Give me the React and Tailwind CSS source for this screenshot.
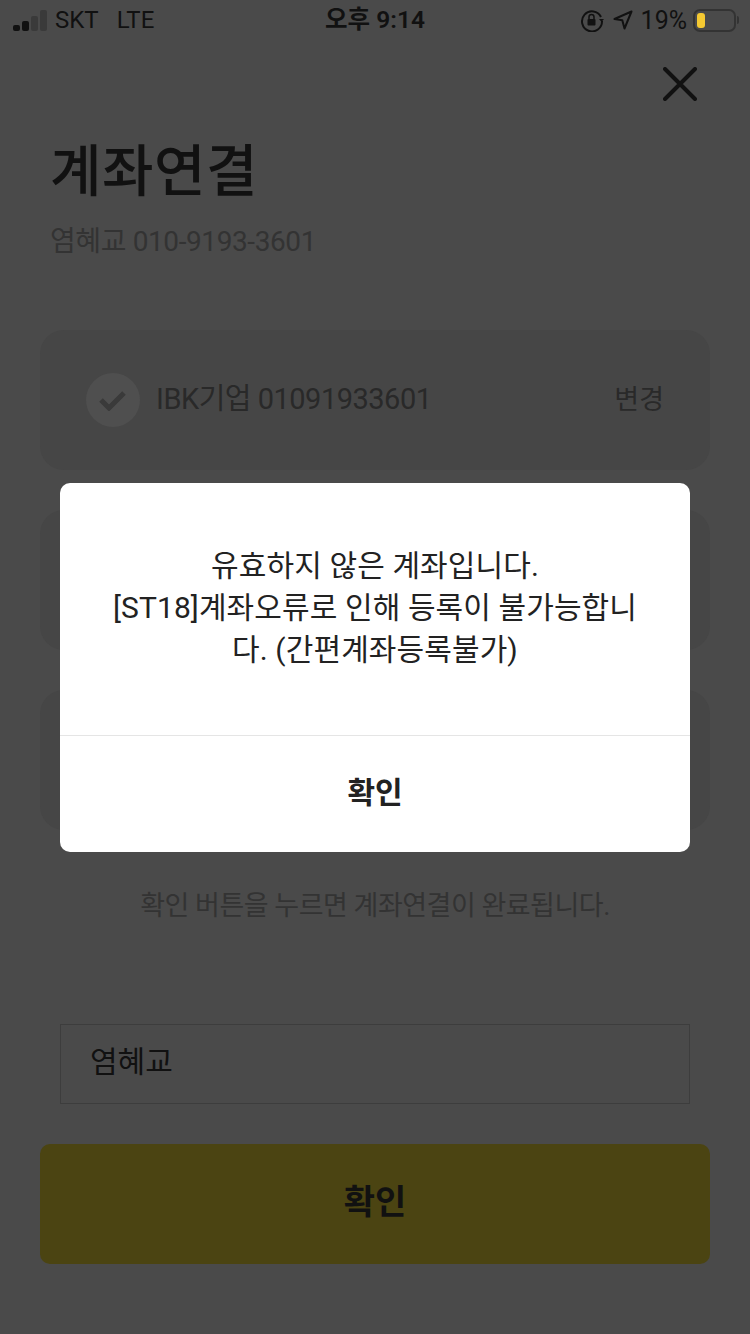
import React from 'react';

const FONT = "font-['Roboto','Noto_Sans_CJK_KR',sans-serif]";

function StatusBar() {
  return (
    <div className="flex h-10 items-center justify-between pl-[13px] pr-[11px] text-[#111]">
      <div className="flex w-[240px] items-center">
        <div className="flex items-end gap-[2px]">
          <span className="h-[6px] w-[7px] rounded-[2px] bg-[#111]" />
          <span className="h-[10px] w-[7px] rounded-[2px] bg-[#111]" />
          <span className="h-[15px] w-[7px] rounded-[2px] bg-[#3a3a3a]" />
          <span className="h-[21px] w-[7px] rounded-[2px] bg-[#3a3a3a]" />
        </div>
        <span className="ml-[8px] text-[24px] leading-none">SKT</span>
        <span className="ml-[18px] text-[24px] leading-none">LTE</span>
      </div>
      <div className="pr-[2px] text-[24.5px] font-semibold leading-none">오후 9:14</div>
      <div className="flex w-[240px] items-center justify-end">
        <svg width="24" height="24" viewBox="0 0 24 24" fill="none" stroke="#111" strokeWidth="2">
          <path d="M21 9A10 10 0 1 0 22 13" />
          <path d="M19 11h5l-2.5 3z" fill="#111" stroke="none" />
          <rect x="7.5" y="11" width="8" height="6.5" rx="1" fill="#111" stroke="none" />
          <path d="M9 11V9a2.500 2.500 0 0 1 5 0v2" strokeWidth="1.500" />
        </svg>
        <svg className="ml-[9px]" width="20" height="20" viewBox="0 0 20 20" fill="none" stroke="#111" strokeWidth="2" strokeLinejoin="round">
          <path d="M18.500 1.500 1.500 9l7.800 1.200L11.500 18.500z" />
        </svg>
        <span className="ml-[8px] text-[25px] leading-none">19%</span>
        <div className="ml-[6px] flex h-[23px] w-[43px] items-center rounded-[7px] border-2 border-[#333] pl-[2px]">
          <span className="h-[15px] w-[8px] rounded-[3px] bg-[#f5c932]" />
        </div>
        <span className="ml-[1px] h-[8px] w-[2px] rounded-r bg-[#333]" />
      </div>
    </div>
  );
}

function AccountCard({ children }) {
  return <div className="flex h-[140px] items-center rounded-[24px] bg-[#464646] pl-[46px] pr-[46px]">{children}</div>;
}

function Modal() {
  return (
    <div className="absolute inset-0 flex items-start justify-center pt-[483px]">
      <div className="w-[630px] overflow-hidden rounded-[10px] bg-white">
        <div className="flex h-[252px] items-center justify-center px-[50px] pb-[2px] text-center text-[30px] leading-[42px] tracking-[0.1px] text-[#222]">
          <p>
            유효하지 않은 계좌입니다.
            <br />
            [ST18]계좌오류로 인해 등록이 불가능합니
            <br />
            다. (간편계좌등록불가)
          </p>
        </div>
        <div className="flex h-[117px] items-center justify-center border-t border-[#e5e5e5] pb-[4px] text-[30px] font-bold text-[#222]">
          확인
        </div>
      </div>
    </div>
  );
}

export default function App() {
  return (
    <div className={`relative h-[1334px] w-[750px] overflow-hidden bg-[#4a4a4a] ${FONT}`}>
      <StatusBar />

      <div className="flex justify-end pr-[53px] pt-[27px]">
        <svg width="34" height="34" viewBox="0 0 34 34" stroke="#111" strokeWidth="4" strokeLinecap="round">
          <path d="M2 2 32 32M32 2 2 32" />
        </svg>
      </div>

      <div className="pl-[50px] pt-[38px]">
        <h1 className="text-[56px] font-medium leading-[66px] tracking-[0.5px] text-[#111]">계좌연결</h1>
        <p className="mt-[17px] text-[28px] leading-[40px] tracking-[-0.4px] text-[#333]">염혜교 010-9193-3601</p>
      </div>

      <div className="mt-[68px] flex flex-col gap-[40px] px-[40px]">
        <AccountCard>
          <div className="flex h-[54px] w-[54px] items-center justify-center rounded-full bg-[#4f4f4f]">
            <svg width="28" height="22" viewBox="0 0 28 22" fill="none" stroke="#3a3a3a" strokeWidth="5">
              <path d="M2 11l8 8L25 4" />
            </svg>
          </div>
          <span className="ml-[16px] flex-1 text-[29px] tracking-[-0.5px] text-[#292929]">IBK기업 01091933601</span>
          <span className="text-[27px] text-[#292929]">변경</span>
        </AccountCard>
        <AccountCard />
        <AccountCard />
      </div>

      <p className="mt-[56px] text-center text-[27px] leading-[40px] tracking-[-0.5px] text-[#333]">
        확인 버튼을 누르면 계좌연결이 완료됩니다.
      </p>

      <div className="mx-[60px] mt-[98px] flex h-[80px] items-center border border-[#3d3d3d] pb-[6px] pl-[29px] text-[30px] text-[#111]">
        염혜교
      </div>

      <div className="mx-[40px] mt-[40px] flex h-[120px] items-center justify-center rounded-[10px] bg-[#4b4412] pb-[4px] text-[34px] font-bold text-[#111]">
        확인
      </div>

      <Modal />
    </div>
  );
}
